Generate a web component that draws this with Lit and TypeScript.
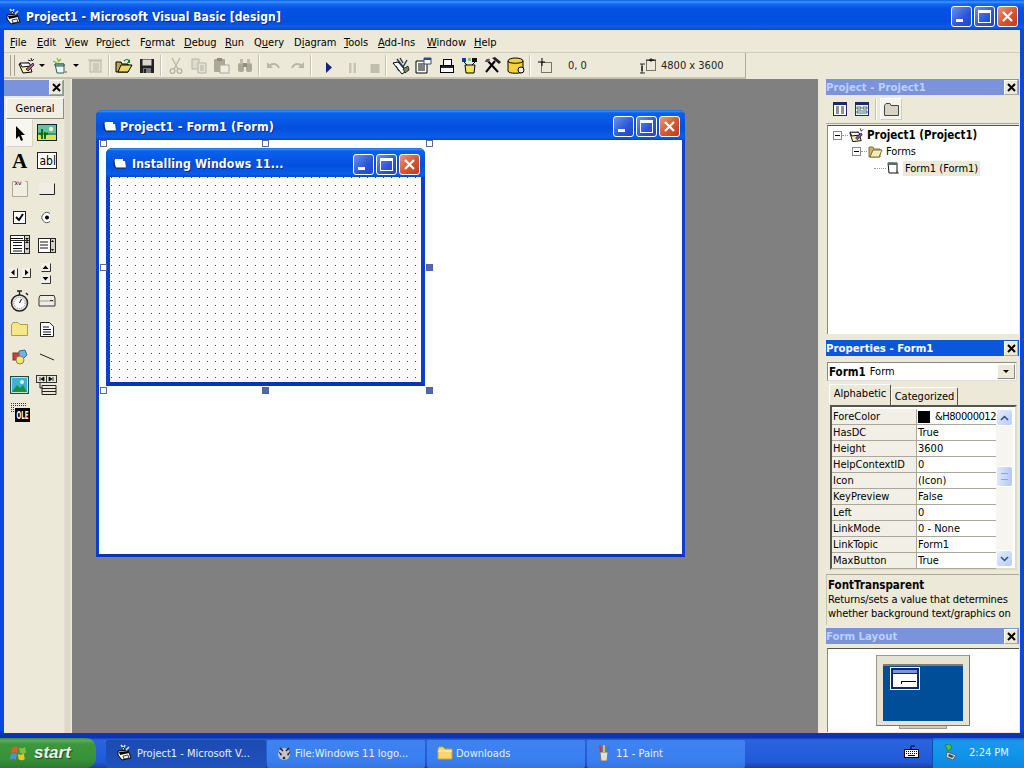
import { LitElement, html, css, TemplateResult } from "lit";
import { customElement } from "lit/decorators.js";

const vbIcon = html`<svg width="18" height="18" viewBox="0 0 18 18"><path d="M2 7l10-1 3 8-9 2-4-5z" fill="#fff" stroke="#000"/><path d="M3 8l9-1 1 2-9 2z" fill="#000"/><path d="M7 12l5-1 1 3-5 1z" fill="#e8e8ff" stroke="#000" stroke-width=".7"/><path d="M5 1l3 4M9 1L7 5M13 3l-3 3" stroke="#d8e4f8" stroke-width="1.6"/><path d="M6 5l1-2 2 2" stroke="#222" fill="none"/></svg>`;
const folderForm = html`<svg width="14" height="14" viewBox="0 0 14 14"><path d="M1 3h3l1 1h7l1 7H3z" fill="#fff"/><path d="M1 3v6l2 2M3 11h10" stroke="#123" fill="none"/><rect x="2" y="2" width="8" height="2" fill="#fff"/></svg>`;

const tb: Record<string, TemplateResult> = {
  project: html`<svg width="18" height="18" viewBox="0 0 18 18"><path d="M1 7l10-1 2 6 1 3-9 1z" fill="#f6efb0" stroke="#000"/><path d="M2 6l9 0 2 3-9 1z" fill="#fff" stroke="#000"/><path d="M8 12l7-6 1 2-6 6z" fill="#ad5a9c" stroke="#000" stroke-width=".7"/><path d="M13 1l1 3M16 2l-2 2M10 3l3 1" stroke="#222"/></svg>`,
  form: html`<svg width="18" height="18" viewBox="0 0 18 18"><path d="M3 7h9v9H5z" fill="#eef7ee" stroke="#2a5d58"/><path d="M3 7h9v2H3z" fill="#9bc2be" stroke="#2a5d58"/><path d="M5 1l2 4M1 4l4 2M9 2L6 5" stroke="#7fbf2f" stroke-width="1.3"/><path d="M13 15h2" stroke="#555"/></svg>`,
  menu: html`<svg width="16" height="16" viewBox="0 0 16 16"><rect x="3" y="3" width="11" height="11" fill="#e4e1d0" stroke="#b5b3a2"/><path d="M1 2h14M6 6h6M6 8h6M6 10h6M6 12h6" stroke="#b5b3a2"/></svg>`,
  open: html`<svg width="18" height="16" viewBox="0 0 18 16"><path d="M1 4h5l1 2h6v8H1z" fill="#c4a73c" stroke="#000"/><path d="M3 14l3-7h11l-4 7z" fill="#ebd964" stroke="#000"/><path d="M9 3c2-2 4-2 5 0" stroke="#0a7a2a" stroke-width="1.2" fill="none"/><path d="M15 1v4h-3" fill="#0a7a2a"/></svg>`,
  save: html`<svg width="16" height="16" viewBox="0 0 16 16"><rect x="1" y="1" width="14" height="14" fill="#222"/><rect x="3.500" y="1.500" width="9" height="6" fill="#d8d8c8"/><rect x="4" y="10" width="8" height="5" fill="#777"/><rect x="5" y="11" width="2" height="4" fill="#222"/></svg>`,
  cut: html`<svg width="14" height="18" viewBox="0 0 14 18"><path d="M3 1l6 11M11 1L5 12" stroke="#b5b3a2" stroke-width="1.3"/><circle cx="3.500" cy="14" r="2.400" fill="none" stroke="#b5b3a2" stroke-width="1.3"/><circle cx="10.500" cy="14" r="2.400" fill="none" stroke="#b5b3a2" stroke-width="1.3"/></svg>`,
  copy: html`<svg width="16" height="16" viewBox="0 0 16 16"><path d="M1 1h7v10H1z" fill="#dddbcb" stroke="#b5b3a2"/><path d="M7 5h8v10H7z" fill="#e4e2d2" stroke="#b5b3a2"/><path d="M9 8h4M9 10h4M9 12h4" stroke="#b5b3a2"/></svg>`,
  paste: html`<svg width="17" height="17" viewBox="0 0 17 17"><rect x="1" y="2" width="11" height="13" rx="1" fill="#aaa899"/><rect x="4" y="1" width="5" height="3" fill="#8f8d7f"/><rect x="7" y="8" width="9" height="8" fill="#eeeddf" stroke="#aaa899"/></svg>`,
  find: html`<svg width="16" height="15" viewBox="0 0 16 15"><rect x="1" y="5" width="6" height="9" rx="2" fill="#aaa899"/><rect x="9" y="5" width="6" height="9" rx="2" fill="#aaa899"/><rect x="3" y="1" width="3" height="5" fill="#bdbbab"/><rect x="10" y="1" width="3" height="5" fill="#bdbbab"/><rect x="6" y="5" width="4" height="4" fill="#8f8d7f"/></svg>`,
  undo: html`<svg width="16" height="12" viewBox="0 0 16 12"><path d="M3 6c3-3 8-3 10 2" fill="none" stroke="#b9b7a6" stroke-width="2"/><path d="M1 2v6h6z" fill="#b9b7a6"/></svg>`,
  redo: html`<svg width="16" height="12" viewBox="0 0 16 12"><path d="M13 6c-3-3-8-3-10 2" fill="none" stroke="#b9b7a6" stroke-width="2"/><path d="M15 2v6H9z" fill="#b9b7a6"/></svg>`,
  play: html`<svg width="16" height="16" viewBox="0 0 16 16"><path d="M8 4l6 5.500-6 5.500z" fill="#0f2380"/></svg>`,
  pause: html`<svg width="16" height="16" viewBox="0 0 16 16"><path d="M8 5h2.500v10H8zM12.500 5H15v10h-2.500z" fill="#c6c4b3"/></svg>`,
  stop: html`<svg width="16" height="16" viewBox="0 0 16 16"><rect x="6.500" y="6" width="9" height="9" fill="#c0beac"/></svg>`,
  pexp: html`<svg width="18" height="18" viewBox="0 0 18 18"><path d="M1 6l5-1 8 9-4 3z" fill="#fff" stroke="#000"/><path d="M4 9l3 5M8 1l3 5M5 2l7 9M15 3l-4 7" stroke="#235" stroke-width="1.4"/><path d="M11 12l5-3 1 4-4 3z" fill="#6a8f4a" stroke="#000" stroke-width=".7"/></svg>`,
  props: html`<svg width="17" height="17" viewBox="0 0 17 17"><path d="M1 4h11v12H1z" fill="#fff" stroke="#000"/><path d="M3 7h7M3 9h7M3 11h7M3 13h7" stroke="#000"/><path d="M9 1h7v6H9z" fill="#fff" stroke="#2b4a8b"/><path d="M9 1h7v2H9z" fill="#2b4a8b"/></svg>`,
  layout: html`<svg width="16" height="16" viewBox="0 0 16 16"><rect x="4.500" y="1.500" width="8" height="7" fill="#fff" stroke="#000"/><rect x="1.500" y="7.500" width="13" height="7" fill="#fff" stroke="#000"/><rect x="2" y="8" width="12" height="2" fill="#223"/></svg>`,
  obj: html`<svg width="17" height="17" viewBox="0 0 17 17"><rect x="1" y="1" width="4" height="4" fill="#123c9a"/><rect x="11" y="1" width="5" height="4" fill="#111"/><rect x="7" y="1" width="3" height="3" fill="#6c8"/><path d="M4 8h10l-1 8H5z" fill="#f2e84a" stroke="#000"/><path d="M3 5l3 3M14 5l-3 3" stroke="#000"/></svg>`,
  tools: html`<svg width="18" height="17" viewBox="0 0 18 17"><path d="M2 15L11 4" stroke="#000" stroke-width="2"/><path d="M8 1l7 6 2-2-6-5z" fill="#222"/><path d="M3 3l11 12" stroke="#000" stroke-width="2"/><path d="M1 5c0-3 3-4 5-3l-1 3z" fill="#555"/></svg>`,
  data: html`<svg width="18" height="18" viewBox="0 0 18 18"><path d="M1 4c0-4 15-4 15 0v10c0 3-15 3-15 0z" fill="#f3d23a" stroke="#000"/><path d="M1 4c0 3 15 3 15 0" fill="none" stroke="#000"/><circle cx="14" cy="13" r="3" fill="#eee" stroke="#000"/></svg>`,
  pos: html`<svg width="16" height="16" viewBox="0 0 16 16"><path d="M1 4h7M5 0v8" stroke="#000"/><rect x="4.500" y="4.500" width="10" height="10" fill="none" stroke="#000" stroke-dasharray="1 1"/></svg>`,
  size: html`<svg width="16" height="16" viewBox="0 0 16 16"><rect x="6.500" y="2.500" width="9" height="10" fill="none" stroke="#000" stroke-dasharray="1 1"/><path d="M6 2h10M11 0v4M2 6v9M0 6h5M0 15h5" stroke="#000" stroke-width=".8"/><path d="M9 2h5M2 8v5" stroke="#000"/></svg>`,
};

const box: Record<string, TemplateResult> = {
  arrow: html`<svg width="18" height="18" viewBox="0 0 18 18"><path d="M5 2v13l3-3 2 5 2-1-2-5h4z" fill="#000"/></svg>`,
  picture: html`<svg width="20" height="18" viewBox="0 0 20 18"><rect x=".5" y=".5" width="19" height="16" fill="#2f9f6f" stroke="#123"/><rect x="1" y="1" width="18" height="8" fill="#68bfa2"/><circle cx="14" cy="5" r="2.200" fill="#f6f3c0"/><path d="M1 11h18v5H1z" fill="#e8dc4a"/><path d="M5 15V5M8 15V8M2 9l3 2M11 9l-3 2" stroke="#0b6e1a" stroke-width="2"/></svg>`,
  abl: html`<svg width="20" height="18" viewBox="0 0 20 18"><rect x=".5" y=".5" width="19" height="16" fill="#fff" stroke="#222"/><text x="2.500" y="13" font-size="12" font-family="DejaVu Sans Condensed, DejaVu Sans, sans-serif">abl</text></svg>`,
  frame: html`<svg width="18" height="18" viewBox="0 0 18 18"><path d="M5.500 1.500H1.500v15h15v-15h-2" fill="none" stroke="#a9a798"/><rect x="2" y="2" width="14" height="14" fill="#f0eee0"/><text x="3.500" y="5" font-size="6" font-family="DejaVu Sans, sans-serif">xv</text></svg>`,
  button: html`<svg width="16" height="12" viewBox="0 0 16 12"><rect x="0" y="0" width="16" height="12" fill="#f0eee0"/><path d="M.5 11.500h15v-11" fill="none" stroke="#222"/></svg>`,
  check: html`<svg width="13" height="13" viewBox="0 0 13 13"><rect x=".5" y=".5" width="12" height="12" fill="#fff" stroke="#222"/><path d="M3 6l3 3 4-6" stroke="#000" stroke-width="2" fill="none"/></svg>`,
  radio: html`<svg width="13" height="13" viewBox="0 0 13 13"><path d="M10 2.500A5 5 0 1 0 10 10.500" fill="#fff" stroke="#555"/><circle cx="7" cy="6.500" r="2" fill="#000"/></svg>`,
  combo: html`<svg width="20" height="20" viewBox="0 0 20 20"><rect x=".5" y=".5" width="19" height="18" fill="#fff" stroke="#222"/><rect x="14" y="1" width="5" height="17" fill="#d6d3c4"/><path d="M1 3.500h12" stroke="#000"/><path d="M3 7.500h9M3 10.500h9M3 13.500h9M3 16h9" stroke="#111"/><path d="M1 5.500h18M14.500 1v17" stroke="#222"/><path d="M15 3h4l-2 2zM15 8h4l-2-2zM15 13h4l-2 2z" fill="#000"/></svg>`,
  list: html`<svg width="18" height="15" viewBox="0 0 18 15"><rect x=".5" y=".5" width="17" height="14" fill="#fff" stroke="#222"/><rect x="12" y="1" width="5" height="13" fill="#d6d3c4"/><path d="M2 4h8M2 7h8M2 10h8M12.500 1v13" stroke="#111"/><path d="M13 4h3l-1.500-2zM13 11h3l-1.500 2z" fill="#000"/></svg>`,
  hs: html`<svg width="22" height="10" viewBox="0 0 22 10"><path d="M.5 9.500h8v-9" fill="none" stroke="#333"/><rect x="0" y="0" width="8" height="9" fill="#f4f2e6"/><path d="M13.500 9.500h8v-9" fill="none" stroke="#333"/><rect x="13" y="0" width="8" height="9" fill="#f4f2e6"/><path d="M5.500 1.500v6L2 4.500zM16 1.500v6l3.500-3z" fill="#000"/></svg>`,
  vs: html`<svg width="11" height="21" viewBox="0 0 11 21"><path d="M.5 8.500h9v-8" fill="none" stroke="#333"/><rect x="0" y="0" width="9" height="8" fill="#f4f2e6"/><path d="M.5 20.500h9v-8" fill="none" stroke="#333"/><rect x="0" y="12" width="9" height="8" fill="#f4f2e6"/><path d="M1.500 6h6L4.500 2.500zM1.500 14h6l-3 3.500z" fill="#000"/></svg>`,
  timer: html`<svg width="20" height="22" viewBox="0 0 20 22"><circle cx="9.500" cy="13" r="8" fill="#e8e6da" stroke="#222" stroke-width="1.500"/><circle cx="9.500" cy="13" r="5.500" fill="#fff" stroke="#888" stroke-dasharray="1 1"/><path d="M9.500 13l2-4" stroke="#000"/><path d="M7 1h5M9.500 1v4M16 3l2 2" stroke="#222" stroke-width="1.400"/></svg>`,
  drive: html`<svg width="18" height="12" viewBox="0 0 18 12"><path d="M1 3l1-2.500h14l1 2.500v8H1z" fill="#f0eee0" stroke="#333"/><path d="M2 6h14" stroke="#999"/><rect x="12" y="5" width="3" height="1" fill="#333"/></svg>`,
  folder: html`<svg width="17" height="14" viewBox="0 0 17 14"><path d="M.5 3L2 .5h5L9 2.500h7.500v11H.5z" fill="#f6e888" stroke="#aa9c50"/></svg>`,
  file: html`<svg width="14" height="15" viewBox="0 0 14 15"><path d="M.5.500h9l4 4v10H.5z" fill="#fff" stroke="#222"/><path d="M3 5h6M3 7.500h8M3 10h8M3 12.500h8" stroke="#111"/></svg>`,
  shape: html`<svg width="16" height="16" viewBox="0 0 16 16"><rect x="1" y="4" width="7" height="7" fill="#d13c3c" stroke="#7d3030"/><path d="M7 2l6-1 2 5-3 3-5-2z" fill="#6fb4e6" stroke="#3a6a94"/><circle cx="8" cy="11" r="4" fill="#f0e870" stroke="#88864a"/></svg>`,
  line: html`<svg width="16" height="10" viewBox="0 0 16 10"><path d="M1 2l14 6" stroke="#222"/></svg>`,
  image: html`<svg width="19" height="18" viewBox="0 0 19 18"><rect x=".5" y=".5" width="18" height="17" fill="#fff" stroke="#1c4a44" stroke-width="1.400"/><rect x="2" y="2" width="15" height="14" fill="#38b4d4"/><circle cx="12" cy="6" r="2" fill="#f4f2b8"/><path d="M2 16l5-7 3 3 3-3 4 7z" fill="#1f8f3a"/></svg>`,
  datactl: html`<svg width="21" height="21" viewBox="0 0 21 21"><rect x=".5" y=".5" width="10" height="7" fill="#e8e6d8" stroke="#333"/><rect x="10.500" y=".5" width="10" height="7" fill="#e8e6d8" stroke="#333"/><path d="M4 2v4M8 2v4L5 4zM13 2v4l3-2zM17 2v4" stroke="#000" fill="#000" stroke-width=".8"/><path d="M4 8v5h2M6 10.500h14v3H6zM6 13.500h14v3H6zM6 16.500h14v3H6z" fill="none" stroke="#222"/></svg>`,
  ole: html`<svg width="20" height="20" viewBox="0 0 20 20"><path d="M1 .5h16M1 2.500h16M1 4.500h4M1 6.500h4M1 8.500h4" stroke="#333" stroke-dasharray="1 1"/><rect x="5" y="5" width="15" height="14" fill="#000"/><text x="6.500" y="16" font-size="10" font-weight="bold" fill="#fff" font-family="DejaVu Sans Condensed, DejaVu Sans, sans-serif" textLength="12" lengthAdjust="spacingAndGlyphs">OLE</text></svg>`,
};

const pj = {
  view: html`<svg width="14" height="14" viewBox="0 0 14 14"><rect x=".5" y=".5" width="13" height="13" fill="#fff" stroke="#1a2a6e"/><rect x="1" y="1" width="12" height="2" fill="#1a2a6e"/><path d="M3 5h3M3 7h3M3 9h3M3 11h3M8 5h3M8 7h3M8 9h3M8 11h3" stroke="#222"/></svg>`,
  obj: html`<svg width="14" height="14" viewBox="0 0 14 14"><rect x=".5" y=".5" width="13" height="13" fill="#dfe" stroke="#1a2a6e"/><rect x="1" y="1" width="12" height="2" fill="#1a2a6e"/><path d="M2 5h4v2H2zM8 5h4v2H8zM2 9h10v2H2z" fill="#fff" stroke="#224" stroke-width=".7"/></svg>`,
  folder: html`<svg width="15" height="13" viewBox="0 0 15 13"><path d="M.5 2.500L2 .5h4l1 2h7.500v10H.5z" fill="#d6d3c4" stroke="#444"/></svg>`,
  root: html`<svg width="16" height="16" viewBox="0 0 17 16"><path d="M1 6l9-1 2 6 1 3-9 1z" fill="#f8f2c2" stroke="#000"/><path d="M1 5h9l2 3-9 1z" fill="#fff" stroke="#000"/><path d="M7 11l6-5 1 2-5 5z" fill="#7f5fa0" stroke="#000" stroke-width=".7"/><path d="M12 1l1 3M15 2l-2 2" stroke="#222"/></svg>`,
  folderOpen: html`<svg width="15" height="13" viewBox="0 0 15 13"><path d="M1 2h4l1 2h6v8H1z" fill="#c8b464" stroke="#7c7240"/><path d="M2 12l3-7h9l-3 7z" fill="#f5eeb4" stroke="#7c7240"/></svg>`,
  form: html`<svg width="13" height="13" viewBox="0 0 13 13"><path d="M1 1h9v10H2z" fill="#fff" stroke="#111"/><path d="M1 1h9v2H1z" fill="#54706d"/><path d="M10 11h2M10 9v2" stroke="#444"/></svg>`,
};

const flag = html`<svg width="18" height="17" viewBox="0 0 18 17"><path d="M2 3c2-1.500 4-1.500 6-.5l-1 5.500c-2-1-4-1-6 .5z" fill="#e8592a"/><path d="M9 2.500c2 1 4 1 6-.5l1 5.500c-2 1.500-4 1.500-6 .5z" fill="#7fc040"/><path d="M.8 9.500c2-1.500 4-1.500 6-.5l-1 5.500c-2-1-4-1-6 .5z" fill="#4a90e0"/><path d="M7.800 9c2 1 4 1 6-.5l1 5.500c-2 1.500-4 1.500-6 .5z" fill="#f0c820"/></svg>`;
const raccoon = html`<svg width="15" height="15" viewBox="0 0 15 15"><circle cx="7" cy="8" r="6" fill="#c4c4cc"/><path d="M1 5l4 3-1 2zM14 5l-4 3 1 2z" fill="#222"/><path d="M3 2l3 3M12 2L9 5" stroke="#222" stroke-width="1.500"/><circle cx="7" cy="12" r="1.300" fill="#222"/></svg>`;
const yfolder = html`<svg width="16" height="14" viewBox="0 0 16 14"><path d="M1 3l1-2h4l2 2h7v10H1z" fill="#f6d86a" stroke="#c8a030"/><path d="M1 5h14" stroke="#fff6c8"/></svg>`;
const paint = html`<svg width="16" height="18" viewBox="0 0 16 18"><path d="M3 8h8l-1 9H4z" fill="#e4e0d0" stroke="#777"/><path d="M4 8L3 1" stroke-width="2" stroke="#d33"/><path d="M7 8V1" stroke="#e8c020" stroke-width="2"/><path d="M10 8l2-6" stroke="#3a7ad0" stroke-width="2"/></svg>`;
const keyboard = html`<svg width="15" height="13" viewBox="0 0 15 13"><rect x=".5" y="4.500" width="14" height="8" fill="#fff" stroke="#000"/><path d="M2 6.500h11M2 8.500h11" stroke="#000" stroke-dasharray="1 1"/><rect x="4" y="10" width="7" height="1" fill="#000"/><path d="M7 4V1h4" stroke="#000" fill="none"/></svg>`;
const net = html`<svg width="16" height="17" viewBox="0 0 16 17"><path d="M1 1l5-1 2 4-4 3z" fill="#4cc14c" stroke="#1d6a2a" stroke-width=".6"/><path d="M3 8l9 3-3 5-7-3z" fill="#d8d8c8" stroke="#445" stroke-width=".7"/><path d="M5 10l5 2-2 2-4-2z" fill="#2a4a6a"/></svg>`;

@customElement("app-root")
export class AppRoot extends LitElement {
  static styles = css`
    :host { display: block; width: 1024px; height: 768px; overflow: hidden; position: relative; font-family: "DejaVu Sans Condensed", "DejaVu Sans", sans-serif; font-size: 11px; color: #000; background: #ece9d8; }
    * { box-sizing: border-box; }
    svg { display: block; flex: none; }
    .screen { display: flex; flex-direction: column; height: 768px; }
    .app { height: 738px; display: flex; flex-direction: column; background: linear-gradient(#0a48dc 730px, #0a34b4 734px); }
    .title { height: 30px; display: flex; align-items: center; padding: 3px 6px 0 5px; background: linear-gradient(#0a5ce6 0, #3d95ff 2px, #1467ee 4px, #0352e2 9px, #024fde 22px, #0a5ee8 27px, #0347cf 30px); color: #fff; font-weight: bold; font-size: 12px; letter-spacing: .1px; text-shadow: 1px 1px 0 #0a2a8c; flex: none; }
    .title .tx { margin-left: 3px; flex: 1; }
    .wbtns { display: flex; gap: 2px; }
    .wb { width: 21px; height: 21px; border: 1px solid #fff; border-radius: 3px; background: linear-gradient(135deg, #6d90ef, #2a55d8 60%, #2148c8); position: relative; }
    .wb.close { background: linear-gradient(135deg, #e8997c, #d8542e 55%, #c23a1c); }
    .wb svg { position: absolute; left: 0; top: 0; }
    .inner { flex: 1; margin: 0 4px 5px; display: flex; flex-direction: column; background: #ece9d8; min-height: 0; }
    .menu { height: 23px; display: flex; align-items: center; padding: 2px 0 0 6px; flex: none; border-bottom: 1px solid #cfccba; }
    .menu span.m { flex: none; display: block; }
    u { text-decoration: underline; text-underline-offset: 1px; }
    .toolbar { height: 26px; width: 742px; display: flex; align-items: center; flex: none; padding: 1px 0 0 6px; border-right: 1px solid #aca899; border-bottom: 2px solid #c5c2b0; }
    .grip { width: 5px; height: 21px; border-left: 1px solid #a5a290; border-right: 1px solid #a5a290; flex: none; }
    .cell { width: 23px; height: 22px; display: flex; align-items: center; justify-content: center; flex: none; }
    .drop { width: 8px; display: flex; justify-content: center; flex: none; }
    .tri { width: 0; height: 0; border: 3px solid transparent; border-top: 3px solid #000; border-bottom: 0; }
    .g3 { margin-left: 3px; }
    .sep { width: 2px; height: 21px; border-left: 1px solid #c5c2b0; border-right: 1px solid #fff; margin: 0 2px; flex: none; }
    .pos { width: 84px; padding-left: 12px; flex: none; color: #222; }
    .sizet { margin-left: 5px; color: #222; white-space: nowrap; }
    .body { flex: 1; display: flex; min-height: 0; }
    .box { width: 68px; flex: none; background: linear-gradient(90deg, #ece9d8 60px, #dcd9c9 61px, #dcd9c9 66px, #ece9d8 67px); padding-top: 1px; }
    .boxtitle { width: 60px; height: 16px; background: #7b93db; display: flex; justify-content: flex-end; padding-right: 1px; }
    .x { width: 14px; height: 15px; background: #ece9d8; border: 1px solid #fff; border-right-color: #aca899; border-bottom-color: #aca899; display: flex; align-items: center; justify-content: center; }
    .general { width: 58px; height: 21px; margin: 2px 0 0 2px; background: #f1efe3; border: 1px solid #fff; border-right-color: #8f8d7e; border-bottom-color: #8f8d7e; text-align: center; line-height: 19px; font-size: 11px; }
    .grid { display: grid; grid-template-columns: 27px 27px; grid-auto-rows: 28px; margin-left: 2px; }
    .tool { display: flex; align-items: center; justify-content: center; }
    .tool.sel { background: #f7f6f0; border: 1px solid #fff; border-right-color: #d5d2c4; border-bottom-color: #d5d2c4; }
    .bigA { font-family: "Liberation Serif", serif; font-weight: bold; font-size: 21px; }
    .mdi { flex: 1; background: #808080; position: relative; overflow: hidden; }
    .win { position: absolute; border: 3px solid #0c3fd0; border-top: 0; border-radius: 6px 6px 0 0; background: #0c3fd0; display: flex; flex-direction: column; }
    .win.outer { left: 24px; top: 31px; width: 589px; height: 447px; border-bottom-color: #0a34b4; }
    .wt { display: flex; align-items: center; flex: none; color: #fff; font-weight: bold; font-size: 12.500px; letter-spacing: .1px; text-shadow: 1px 1px 0 #0a2a8c; background: linear-gradient(#0a5ce6 0, #3d95ff 1px, #0a62ea 3px, #024fde 60%, #0a5ee8 90%, #0347cf 100%); margin: 0 -3px; border-radius: 6px 6px 0 0; }
    .outer .wt { height: 30px; padding: 3px 5px 0 7px; }
    .wt .tx { flex: 1; margin-left: 3px; }
    .client { flex: 1; background: #fff; position: relative; }
    .win.inner2 { left: 7px; top: 8px; width: 319px; height: 238px; border: 4px solid #0c3fd0; border-top: 0; background: #0c3fd0; border-bottom-color: #0a34b4; }
    .inner2 .wt { height: 29px; margin: 0 -4px; padding: 3px 5px 0 7px; font-size: 12.200px; }
    .inner2 .wt .tx { margin-left: 5px; }
    .inner2 .client { background-color: #fff; background-image: radial-gradient(circle at 1.500px .5px, #444 .55px, transparent .9px); background-size: 8px 8px; }
    .h { position: absolute; width: 7px; height: 7px; background: #fff; border: 1px solid #5a6a9a; }
    .h.on { background: #5068b0; border-color: #4a62aa; }
    .right { width: 202px; flex: none; padding: 0 1px 0 8px; display: flex; flex-direction: column; }
    .pt { height: 16px; background: #7b93db; color: #bcd0fa; font-weight: bold; display: flex; justify-content: space-between; align-items: center; padding: 0 1px 0 0; flex: none; font-size: 11.300px; }
    .pt.act { background: #0a56dc; color: #fff; }
    .pjtool { height: 29px; display: flex; align-items: center; padding-left: 3px; flex: none; border-bottom: 1px solid #aca899; margin-bottom: 1px; }
    .pjtool .cell { width: 22px; }
    .pjtool .pressed { background: #f5f4ec; border: 1px solid #fff; border-right-color: #ccc; border-bottom-color: #ccc; margin-left: 3px; }
    .pjsep { margin: 0 0 0 2px; }
    .tree { height: 209px; flex: none; background: #fff; margin-left: 1px; border-top: 1px solid #55544a; border-left: 1px solid #8a8878; padding-top: 1px; }
    .tr { height: 16.500px; display: flex; align-items: center; }
    .d0 { padding-left: 5px; }
    .d1 { padding-left: 24px; }
    .d2 { padding-left: 46px; }
    .pm { width: 9px; height: 9px; border: 1px solid #8a8a8a; position: relative; flex: none; background: #fff; }
    .pm::after { content: ""; position: absolute; left: 1px; right: 1px; top: 3px; height: 1px; background: #000; }
    .dl { width: 6px; border-top: 1px dotted #999; flex: none; margin-right: 1px; }
    .d2 .dl { width: 12px; }
    .lb { margin-left: 3px; white-space: nowrap; padding: 0 1px; }
    .d1 .lb { margin-left: 2px; }
    .lb.b { font-weight: bold; font-size: 11.500px; margin-left: 1px; }
    .lb.hl { background: #ece9d8; padding: 1px 2px; }
    .section { margin-top: 6px; flex: none; }
    .combo { height: 19px; margin: 6px 2px 0 1px; background: #fff; border: 1px solid #8d8b7c; border-right-color: #ddd; border-bottom-color: #ddd; display: flex; align-items: center; padding-left: 1px; }
    .combo b { margin-right: 4px; font-size: 11.500px; }
    .combo .sp { flex: 1; }
    .dd { width: 18px; height: 15px; background: #ece9d8; border: 1px solid #fff; border-right-color: #888; border-bottom-color: #888; display: flex; align-items: center; justify-content: center; margin-right: 1px; }
    .tabs { display: flex; margin: 3px 0 0 3px; height: 21px; align-items: flex-end; }
    .tab { height: 21px; width: 62px; text-align: center; line-height: 18px; background: #ece9d8; border: 1px solid #fff; border-bottom: 0; border-right-color: #55544a; border-radius: 2px 2px 0 0; }
    .tab.off { height: 18px; width: 67px; line-height: 18px; }
    .pgrid { height: 165px; margin: 0 2px 0 4px; border: 2px solid #55544a; border-right-color: #dedbcb; border-bottom-color: #dedbcb; background: #fff; display: flex; padding-top: 2px; }
    .rows { width: 164px; flex: none; }
    .row { height: 16px; display: grid; grid-template-columns: 85px 79px; border-bottom: 1px solid #aca899; background: #fff; line-height: 15px; }
    .row > div { padding-left: 1px; white-space: nowrap; overflow: hidden; }
    .row > div:first-child { background: #f2f0e6; border-right: 1px solid #aca899; }
    .val { display: flex; align-items: center; gap: 5px; }
    .sw { width: 12px; height: 12px; background: #000; flex: none; }
    .tight { letter-spacing: -.45px; }
    .sb { width: 17px; display: flex; flex-direction: column; flex: none; background: #f6f5ef; height: 158px; }
    .sbb { height: 17px; flex: none; border-radius: 3px; background: linear-gradient(135deg, #e6edfb, #b9cbf3); border: 1px solid #fff; display: flex; align-items: center; justify-content: center; }
    .thumb { height: 21px; margin-top: 40px; flex: none; border-radius: 3px; background: linear-gradient(90deg, #dfe8fb, #b5c8f2); border: 1px solid #fff; display: flex; align-items: center; justify-content: center; }
    .thumb i { display: block; width: 7px; height: 7px; border-top: 1px solid #8ea4e2; border-bottom: 1px solid #8ea4e2; }
    .sb .fl { flex: 1; }
    .desc { height: 51px; margin-top: 4px; border-top: 1px solid #aca899; border-left: 1px solid #c5c2b0; padding: 3px 0 0 1px; line-height: 13.500px; letter-spacing: -.1px; }
    .desc b { display: block; font-size: 11.500px; line-height: 15px; letter-spacing: 0; }
    .desc div { white-space: nowrap; }
    .lt { margin-top: 3px; }
    .layoutbox { height: 84px; margin: 4px 0 0 1px; background: #fff; border-top: 1px solid #55544a; border-left: 1px solid #8a8878; display: flex; flex-direction: column; align-items: center; padding: 6px 1px 0 0; }
    .mon { width: 94px; height: 71px; background: #e6e3d3; border: 1px solid #9a988a; border-right-color: #777; border-bottom-color: #777; padding: 8px 6px 4px 6px; position: relative; }
    .mon .scr { width: 80px; height: 57px; background: #004e98; border-top: 2px solid #7f7e70; position: relative; }
    .miniw { position: absolute; left: 8px; top: 2px; width: 28px; height: 21px; background: #fff; border: 2px solid #0b2a66; outline: 1px solid #fff; display: flex; flex-direction: column; }
    .miniw .bar { height: 4px; background: #7b93db; border-bottom: 1px solid #0b2a66; }
    .miniw .mk { width: 15px; height: 3px; margin: 7px 0 0 8px; border-top: 1px solid #000; border-left: 1px solid #000; }
    .stand { width: 48px; height: 3px; background: #cfccb8; border: 1px solid #999; border-top: 0; }
    .task { height: 30px; display: flex; align-items: stretch; background: linear-gradient(#1a3fa8 0, #2b66dc 2px, #2a63dc 4px, #245edb 50%, #2259d4 80%, #1941a5 100%); color: #fff; flex: none; }
    .start { width: 96px; display: flex; align-items: center; padding-left: 10px; gap: 6px; background: linear-gradient(#3b8f3b 0, #5ea85a 8%, #3c983c 20%, #379138 70%, #2c7a30 100%); border-radius: 0 10px 10px 0; font: italic bold 17px "Liberation Sans", sans-serif; color: #f0f0f0; text-shadow: 1px 1px 1px #1a4a1a; margin-right: 10px; }
    .tbn { width: 158px; margin: 2px 2px 0 0; padding-bottom: 2px; border-radius: 2px; display: flex; align-items: center; padding-left: 10px; gap: 3px; background: linear-gradient(#3f83f0, #3a7ff0 70%, #3574e4); white-space: nowrap; color: #e8f0ff; }
    .tbn.active { width: 160px; margin-right: 1px; background: linear-gradient(#1c4bb0, #1f52bd); }
    .tsp { flex: 1; display: flex; align-items: center; justify-content: flex-end; padding: 0 13px 4px 0; }
    .tray { width: 92px; display: flex; align-items: center; padding: 0 0 2px 11px; gap: 9px; background: linear-gradient(#0f6fd4 0, #1a96ec 3px, #1195ec 50%, #0f87e0 100%); border-left: 1px solid #0a4ea8; }
    .clock { color: #e8f4ff; }
  `;

  private closeX() {
    return html`<svg width="9" height="9" viewBox="0 0 9 9"><path d="M1 1l7 7M8 1L1 8" stroke="#000" stroke-width="2"/></svg>`;
  }

  private winBtns() {
    return html`<div class="wbtns">
      <div class="wb"><svg width="19" height="19" viewBox="0 0 19 19"><rect x="4" y="12" width="7" height="3" fill="#fff"/></svg></div>
      <div class="wb"><svg width="19" height="19" viewBox="0 0 19 19"><rect x="3.500" y="3.500" width="12" height="12" fill="none" stroke="#fff"/><rect x="3" y="3" width="13" height="3" fill="#fff"/></svg></div>
      <div class="wb close"><svg width="19" height="19" viewBox="0 0 19 19"><path d="M5 5l9 9M14 5l-9 9" stroke="#fff" stroke-width="2.200"/></svg></div>
    </div>`;
  }

  render() {
    const menus: [string, string, string, number][] = [
      ["", "F", "ile", 27], ["", "E", "dit", 28], ["", "V", "iew", 31], ["Pr", "o", "ject", 44], ["F", "o", "rmat", 44], ["", "D", "ebug", 41],
      ["", "R", "un", 29], ["Q", "u", "ery", 40], ["D", "i", "agram", 50], ["", "T", "ools", 34], ["", "A", "dd-Ins", 49], ["", "W", "indow", 47], ["", "H", "elp", 30],
    ];
    const handles: [number, number, boolean][] = [
      [1, 0, false], [163, 0, false], [327, 0, false], [1, 124, false], [327, 124, true], [1, 247, false], [163, 247, true], [327, 247, true],
    ];
    const tools: (TemplateResult | string)[] = [
      box.arrow, box.picture, "A", box.abl, box.frame, box.button, box.check, box.radio, box.combo, box.list, box.hs, box.vs,
      box.timer, box.drive, box.folder, box.file, box.shape, box.line, box.image, box.datactl, box.ole,
    ];
    const props: [string, string][] = [
      ["ForeColor", "&H80000012"], ["HasDC", "True"], ["Height", "3600"], ["HelpContextID", "0"], ["Icon", "(Icon)"],
      ["KeyPreview", "False"], ["Left", "0"], ["LinkMode", "0 - None"], ["LinkTopic", "Form1"], ["MaxButton", "True"],
    ];
    const cell = (i: TemplateResult) => html`<div class="cell">${i}</div>`;
    const sep = html`<div class="sep"></div>`;
    const drop = html`<div class="drop"><div class="tri"></div></div>`;

    return html`<div class="screen">
      <div class="app">
        <div class="title">${vbIcon}<span class="tx">Project1 - Microsoft Visual Basic [design]</span>${this.winBtns()}</div>
        <div class="inner">
          <div class="menu">
            ${menus.map(([a, b, c, w]) => html`<span class="m" style="width:${w}px">${a}<u>${b}</u>${c}</span>`)}
          </div>
          <div class="toolbar">
            <div class="grip"></div>
            ${cell(tb.project)}${drop}
            <div class="cell g3">${tb.form}</div>${drop}
            <div class="cell g3">${tb.menu}</div>${sep}
            ${cell(tb.open)}${cell(tb.save)}${sep}
            ${cell(tb.cut)}${cell(tb.copy)}${cell(tb.paste)}${cell(tb.find)}${sep}
            ${cell(tb.undo)}${cell(tb.redo)}${sep}
            ${cell(tb.play)}${cell(tb.pause)}${cell(tb.stop)}${sep}
            ${cell(tb.pexp)}${cell(tb.props)}${cell(tb.layout)}${cell(tb.obj)}${cell(tb.tools)}${cell(tb.data)}${sep}
            ${cell(tb.pos)}
            <div class="pos">0, 0</div>
            ${tb.size}
            <div class="sizet">4800 x 3600</div>
          </div>
          <div class="body">
            <div class="box">
              <div class="boxtitle"><div class="x">${this.closeX()}</div></div>
              <div class="general">General</div>
              <div class="grid">
                ${tools.map((t, i) => html`<div class="tool ${i === 0 ? "sel" : ""}">${t === "A" ? html`<span class="bigA">A</span>` : t}</div>`)}
              </div>
            </div>
            <div class="mdi">
              <div class="win outer">
                <div class="wt">${folderForm}<span class="tx">Project1 - Form1 (Form)</span>${this.winBtns()}</div>
                <div class="client">
                  <div class="win inner2">
                    <div class="wt">${folderForm}<span class="tx">Installing Windows 11...</span>${this.winBtns()}</div>
                    <div class="client"></div>
                  </div>
                  ${handles.map(([l, t, on]) => html`<div class="h ${on ? "on" : ""}" style="left:${l}px;top:${t}px"></div>`)}
                </div>
              </div>
            </div>
            <div class="right">
              <div class="pt"><span>Project - Project1</span><div class="x">${this.closeX()}</div></div>
              <div class="pjtool">
                <div class="cell">${pj.view}</div><div class="cell">${pj.obj}</div>
                <div class="sep pjsep"></div>
                <div class="cell pressed">${pj.folder}</div>
              </div>
              <div class="tree">
                <div class="tr d0"><div class="pm"></div><div class="dl"></div>${pj.root}<span class="lb b">Project1 (Project1)</span></div>
                <div class="tr d1"><div class="pm"></div><div class="dl"></div>${pj.folderOpen}<span class="lb">Forms</span></div>
                <div class="tr d2"><div class="dl"></div>${pj.form}<span class="lb hl">Form1 (Form1)</span></div>
              </div>
              <div class="section">
                <div class="pt act"><span>Properties - Form1</span><div class="x">${this.closeX()}</div></div>
                <div class="combo"><b>Form1</b><span>Form</span><span class="sp"></span><div class="dd"><div class="tri"></div></div></div>
                <div class="tabs"><div class="tab">Alphabetic</div><div class="tab off">Categorized</div></div>
                <div class="pgrid">
                  <div class="rows">
                    ${props.map(([k, v], i) => html`<div class="row"><div>${k}</div><div class="val">${i === 0 ? html`<span class="sw"></span>` : ""}<span class=${i === 0 ? "tight" : ""}>${v}</span></div></div>`)}
                  </div>
                  <div class="sb">
                    <div class="sbb"><svg width="9" height="6" viewBox="0 0 9 6"><path d="M1 5l3.500-3.500L8 5" fill="none" stroke="#2a4a9a" stroke-width="1.500"/></svg></div>
                    <div class="thumb"><i></i></div>
                    <div class="fl"></div>
                    <div class="sbb"><svg width="9" height="6" viewBox="0 0 9 6"><path d="M1 1l3.500 3.500L8 1" fill="none" stroke="#2a4a9a" stroke-width="1.500"/></svg></div>
                  </div>
                </div>
                <div class="desc"><b>FontTransparent</b><div>Returns/sets a value that determines</div><div>whether background text/graphics on</div></div>
              </div>
              <div class="pt lt"><span>Form Layout</span><div class="x">${this.closeX()}</div></div>
              <div class="layoutbox">
                <div class="mon"><div class="scr"><div class="miniw"><div class="bar"></div><div class="mk"></div></div></div></div>
                <div class="stand"></div>
              </div>
            </div>
          </div>
        </div>
      </div>
      <div class="task">
        <div class="start">${flag}<span>start</span></div>
        <div class="tbn active">${vbIcon}<span>Project1 - Microsoft V...</span></div>
        <div class="tbn">${raccoon}<span>File:Windows 11 logo...</span></div>
        <div class="tbn">${yfolder}<span>Downloads</span></div>
        <div class="tbn">${paint}<span>11 - Paint</span></div>
        <div class="tsp">${keyboard}</div>
        <div class="tray">${net}<span class="clock">2:24 PM</span></div>
      </div>
    </div>`;
  }
}
